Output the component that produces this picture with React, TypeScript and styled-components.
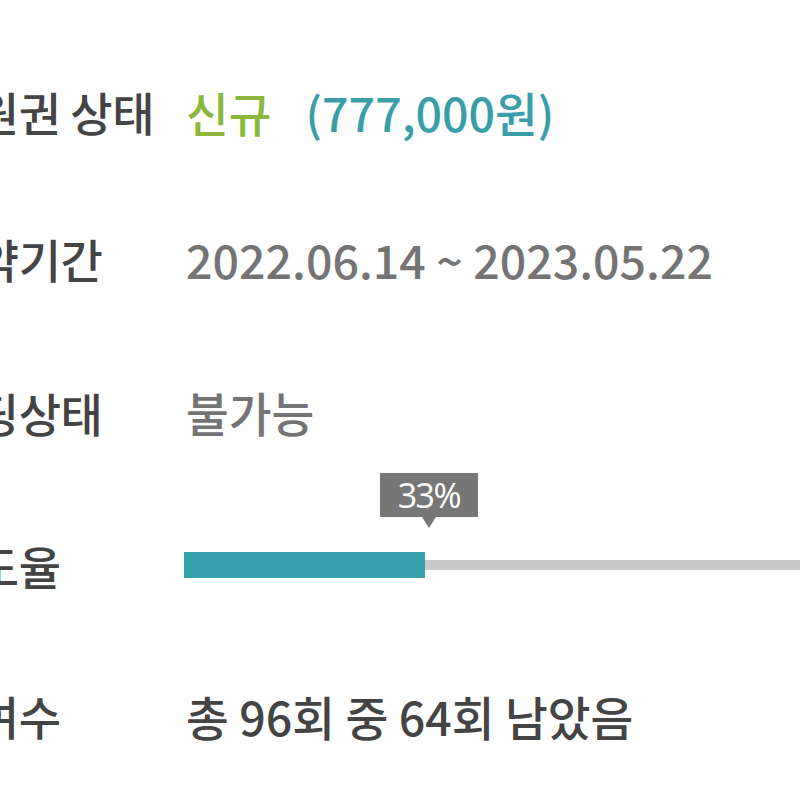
import React from "react";
import styled, { createGlobalStyle } from "styled-components";

const GlobalStyle = createGlobalStyle`
  html, body {
    margin: 0;
    padding: 0;
    background: #fff;
    overflow: hidden;
  }
  body {
    width: 800px;
    height: 800px;
    font-family: "Noto Sans CJK KR", "Noto Sans", sans-serif;
  }
`;

const Page = styled.div`
  width: 800px;
  height: 800px;
  padding-top: 40px;
  box-sizing: border-box;
  overflow: hidden;
`;

const Row = styled.div<{ $h: number }>`
  display: flex;
  align-items: center;
  height: ${(p) => p.$h}px;
`;

const Label = styled.div`
  flex: 0 0 251px;
  margin-left: -65px;
  font-size: 46px;
  font-weight: 500;
  color: #444;
  white-space: nowrap;
  letter-spacing: -0.5px;
`;

const Value = styled.div<{ $tone?: "gray" | "dark" }>`
  display: flex;
  align-items: center;
  font-size: 46.5px;
  font-weight: 500;
  color: ${(p) => (p.$tone === "dark" ? "#444" : "#747474")};
  white-space: nowrap;
`;

const Status = styled.span`
  color: #8ab73c;
  margin-right: 34px;
`;

const Price = styled.span`
  color: #3a9ea9;
`;

const ProgressCell = styled.div`
  flex: 1;
  min-width: 0;
  margin-left: -2px;
`;

const Track = styled.div`
  position: relative;
  width: 730px;
  height: 26px;
  display: flex;
  align-items: center;
`;

const Rail = styled.div`
  width: 100%;
  height: 10px;
  background: #c9c9c9;
`;

const Fill = styled.div`
  position: absolute;
  left: 0;
  top: 0;
  height: 26px;
  background: #35a1ad;
`;

const Bubble = styled.div`
  position: absolute;
  bottom: 61px;
  margin-left: 4px;
  transform: translateX(-50%);
  width: 98px;
  height: 44px;
  background: #777;
  color: #fff;
  font-family: "Open Sans", "Noto Sans", sans-serif;
  font-size: 34px;
  display: flex;
  align-items: center;
  justify-content: center;
  letter-spacing: -1.5px;

  &::after {
    content: "";
    position: absolute;
    left: 50%;
    top: 100%;
    margin-left: -7px;
    border-left: 7px solid transparent;
    border-right: 7px solid transparent;
    border-top: 11px solid #777;
  }
`;

const rate = 33;

export default function App() {
  return (
    <>
      <GlobalStyle />
      <Page>
        <Row $h={142}>
          <Label>회원권 상태</Label>
          <Value>
            <Status>신규</Status>
            <Price>(777,000원)</Price>
          </Value>
        </Row>
        <Row $h={152}>
          <Label>계약기간</Label>
          <Value $tone="gray">2022.06.14 ~ 2023.05.22</Value>
        </Row>
        <Row $h={155}>
          <Label>홀딩상태</Label>
          <Value $tone="gray">불가능</Value>
        </Row>
        <Row $h={151}>
          <Label>진도율</Label>
          <ProgressCell>
            <Track>
              <Rail />
              <Fill style={{ width: `${rate}%` }} />
              <Bubble style={{ left: `${rate}%` }}>{rate}%</Bubble>
            </Track>
          </ProgressCell>
        </Row>
        <Row $h={150}>
          <Label>잔여수</Label>
          <Value $tone="dark">총 96회 중 64회 남았음</Value>
        </Row>
      </Page>
    </>
  );
}
